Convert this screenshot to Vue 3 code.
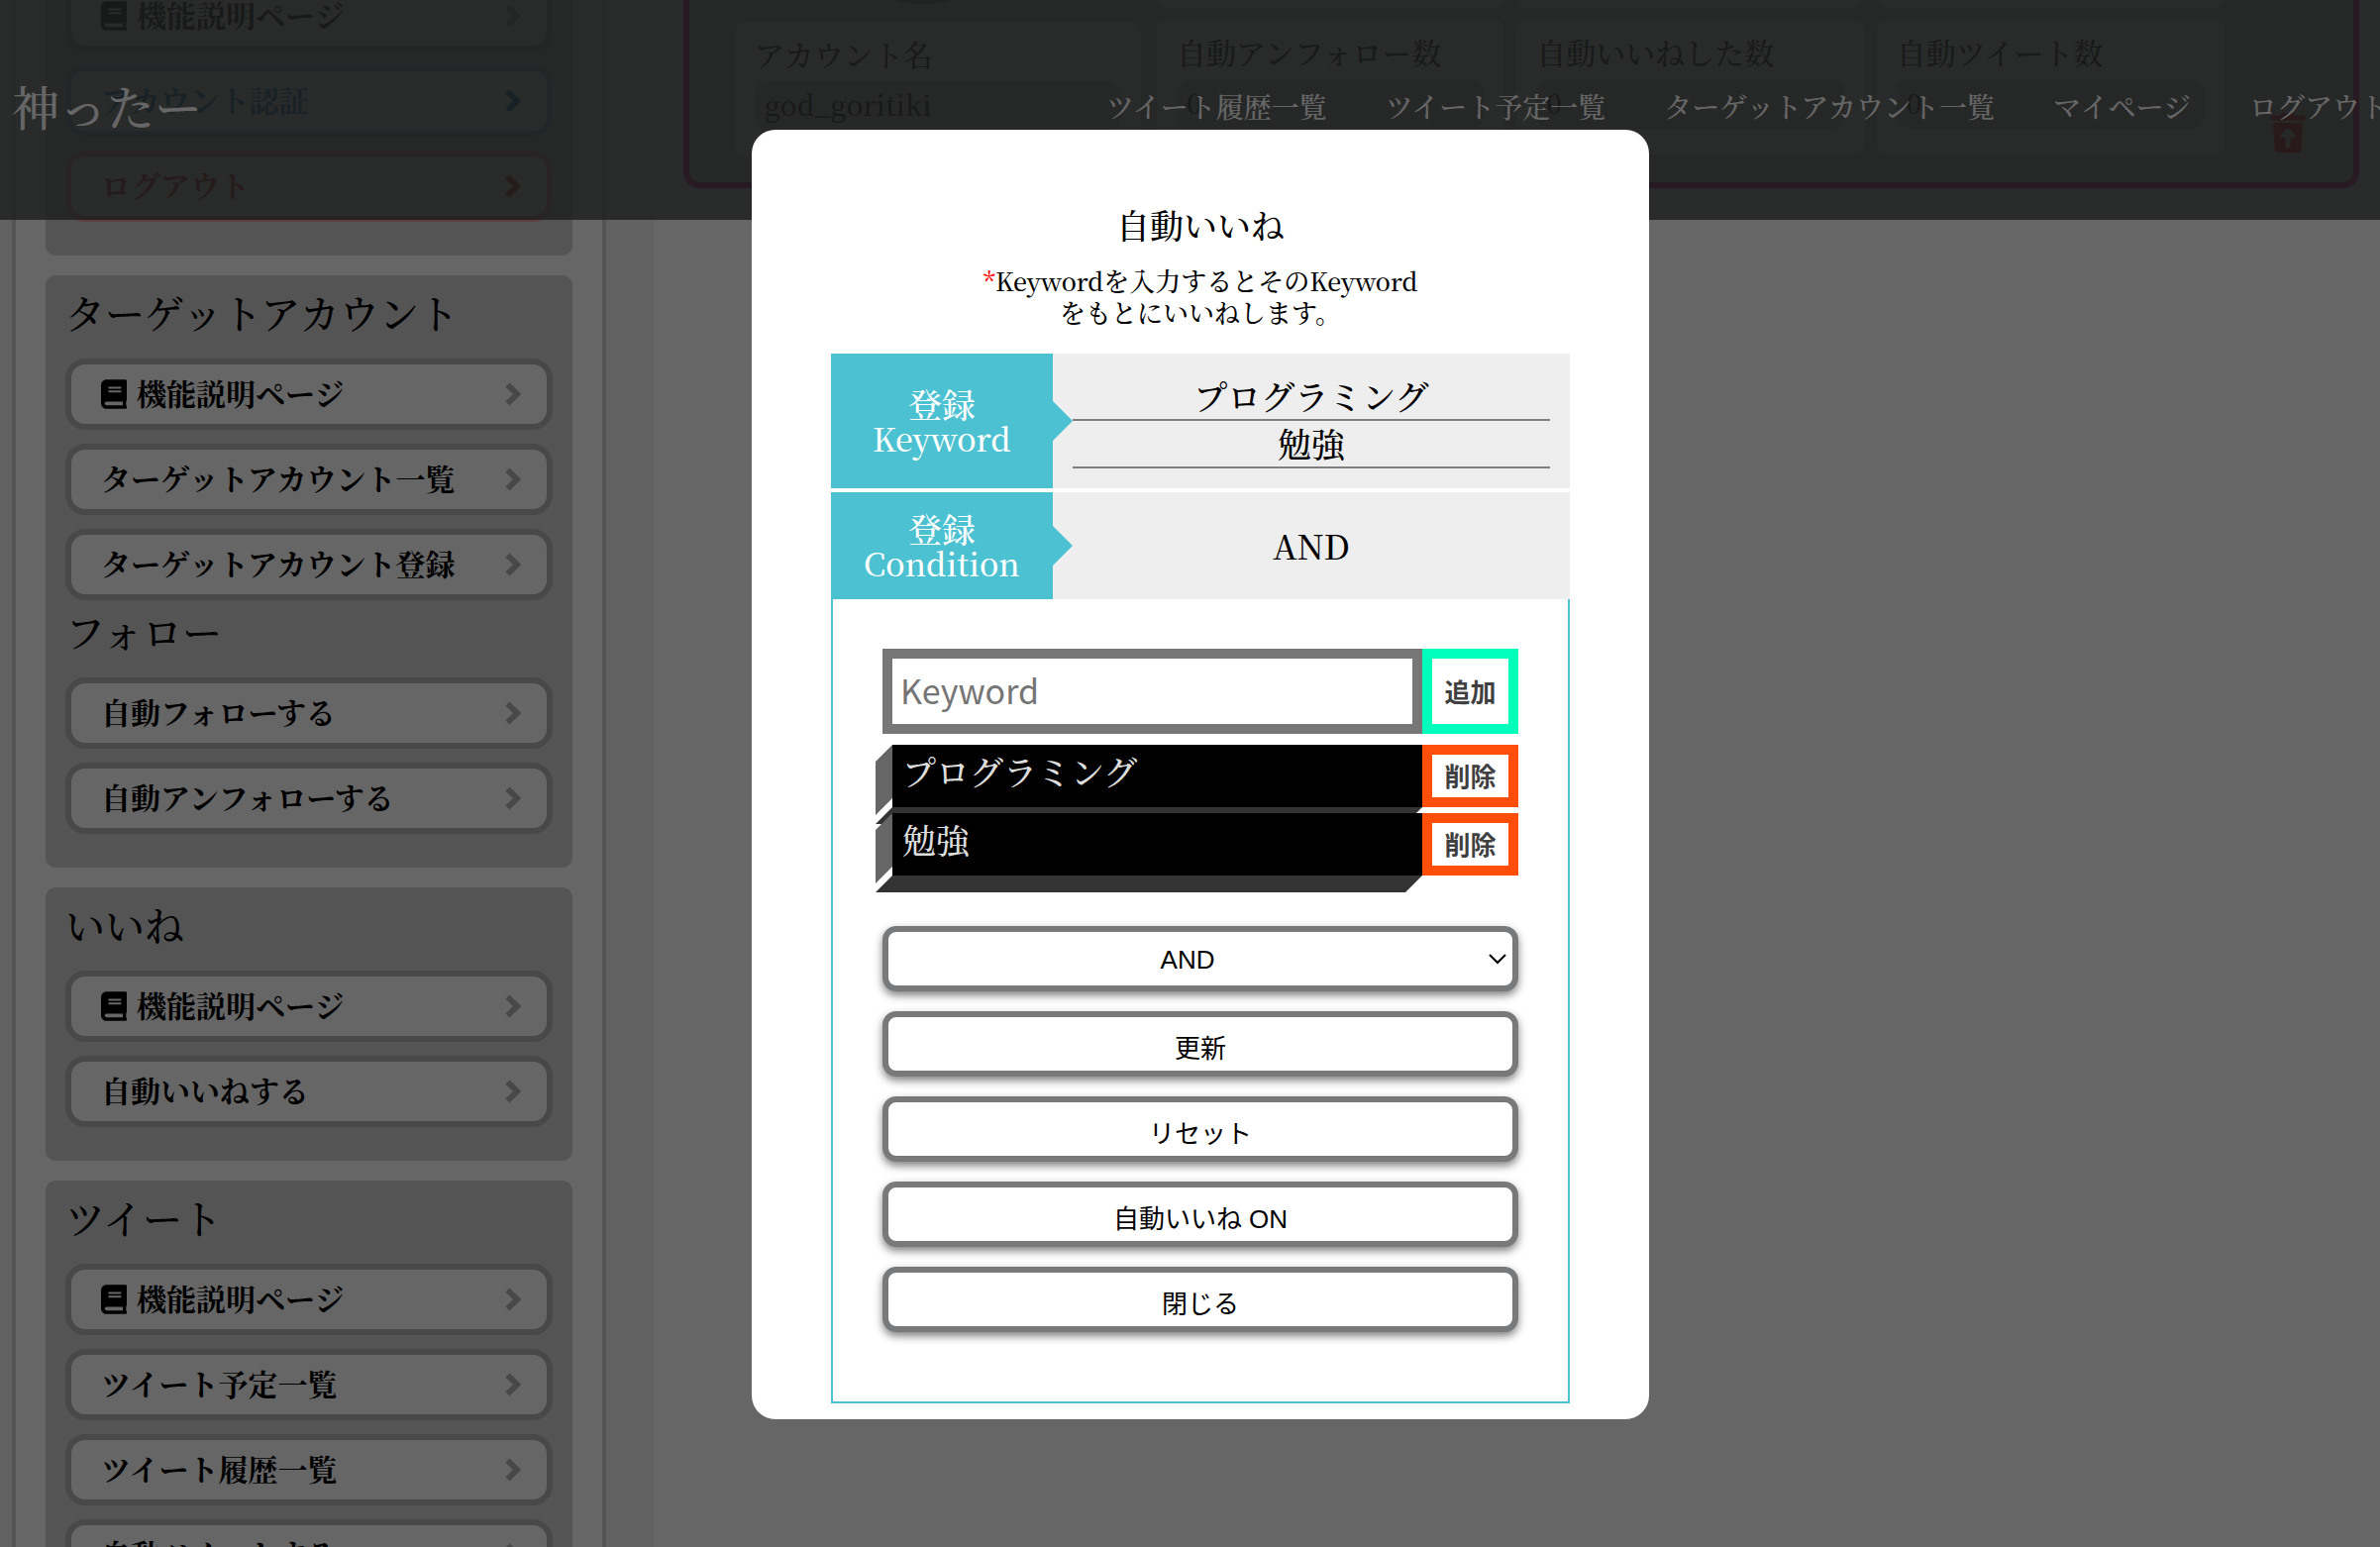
<script setup>
import { ref } from 'vue'

const navLinks = ['ツイート履歴一覧', 'ツイート予定一覧', 'ターゲットアカウント一覧', 'マイページ', 'ログアウト']

const sections = [
  {
    groups: [
      {
        items: [
          { label: '機能説明ページ', book: true },
          { label: 'アカウント認証', tone: 'blue' },
          { label: 'ログアウト', tone: 'red' },
        ],
      },
    ],
  },
  {
    groups: [
      {
        title: 'ターゲットアカウント',
        items: [
          { label: '機能説明ページ', book: true },
          { label: 'ターゲットアカウント一覧' },
          { label: 'ターゲットアカウント登録' },
        ],
      },
      {
        title: 'フォロー',
        items: [{ label: '自動フォローする' }, { label: '自動アンフォローする' }],
      },
    ],
  },
  {
    groups: [
      {
        title: 'いいね',
        items: [{ label: '機能説明ページ', book: true }, { label: '自動いいねする' }],
      },
    ],
  },
  {
    groups: [
      {
        title: 'ツイート',
        items: [
          { label: '機能説明ページ', book: true },
          { label: 'ツイート予定一覧' },
          { label: 'ツイート履歴一覧' },
          { label: '自動ツイートする' },
        ],
      },
    ],
  },
]

const stats = [
  { label: '自動アンフォロー数', value: '0' },
  { label: '自動いいねした数', value: '0' },
  { label: '自動ツイート数', value: '0' },
]

const keywords = ref(['プログラミング', '勉強'])
const draft = ref('')
const condition = ref('AND')
const actions = ['更新', 'リセット', '自動いいね ON', '閉じる']

function addKeyword() {
  if (draft.value) keywords.value.push(draft.value)
  draft.value = ''
}
</script>

<template>
  <div class="root">
    <div class="page">
      <aside class="side">
        <div class="side-inner">
          <section v-for="(section, i) in sections" :key="i" class="menu">
            <div v-for="(group, g) in section.groups" :key="g">
              <h2 v-if="group.title">{{ group.title }}</h2>
              <a v-for="item in group.items" :key="item.label" href="#" class="menu-link" :class="item.tone">
                <svg v-if="item.book" class="book" viewBox="0 0 448 512" aria-hidden="true">
                  <path d="M448 360V24c0-13.3-10.7-24-24-24H96C43 0 0 43 0 96v320c0 53 43 96 96 96h328c13.3 0 24-10.7 24-24v-16c0-7.5-3.5-14.3-8.9-18.7-4.2-15.4-4.2-59.3 0-74.7 5.4-4.3 8.9-11.1 8.9-18.6zM128 134c0-3.3 2.7-6 6-6h212c3.3 0 6 2.7 6 6v20c0 3.3-2.7 6-6 6H134c-3.3 0-6-2.7-6-6v-20zm0 64c0-3.3 2.7-6 6-6h212c3.3 0 6 2.7 6 6v20c0 3.3-2.7 6-6 6H134c-3.3 0-6-2.7-6-6v-20zm253.4 250H96c-17.7 0-32-14.3-32-32 0-17.6 14.4-32 32-32h285.4c-1.9 17.1-1.9 46.9 0 64z" />
                </svg>
                <span>{{ item.label }}</span>
                <svg class="chevron" viewBox="0 0 16 24" aria-hidden="true">
                  <path d="M2.5 2.5L12 12L2.5 21.5" />
                </svg>
              </a>
            </div>
          </section>
        </div>
      </aside>

      <main class="main">
        <article class="card">
          <div class="profile">
            <div class="avatar"></div>
            <div class="panel">
              <h3>アカウント名</h3>
              <p class="value">god_goritiki</p>
            </div>
          </div>
          <div class="stats">
            <div v-for="n in 3" :key="n" class="panel blank"></div>
            <div v-for="stat in stats" :key="stat.label" class="panel">
              <h3>{{ stat.label }}</h3>
              <p class="value">{{ stat.value }}</p>
            </div>
          </div>
          <button type="button" class="trash" aria-label="削除">
            <svg viewBox="0 0 448 512" aria-hidden="true">
              <path d="M53.2 467a48 48 0 0 0 47.9 45h245.8a48 48 0 0 0 47.9-45L416 128H32zm70.11-175.8l89.38-94.26a15.41 15.41 0 0 1 22.62 0l89.38 94.26c10.08 10.62 2.94 28.8-11.32 28.8H256v112a16 16 0 0 1-16 16h-32a16 16 0 0 1-16-16V320h-57.37c-14.26 0-21.4-18.18-11.32-28.8zM432 32H312l-9.4-18.7A24 24 0 0 0 281.1 0H166.8a23.72 23.72 0 0 0-21.4 13.3L136 32H16A16 16 0 0 0 0 48v32a16 16 0 0 0 16 16h416a16 16 0 0 0 16-16V48a16 16 0 0 0-16-16z" />
            </svg>
          </button>
        </article>
      </main>
    </div>

    <header class="top">
      <a href="#" class="brand">神ったー</a>
      <nav>
        <a v-for="link in navLinks" :key="link" href="#">{{ link }}</a>
      </nav>
    </header>

    <div class="overlay">
      <div class="modal" role="dialog" aria-labelledby="modal-title">
        <h1 id="modal-title">自動いいね</h1>
        <p class="note">
          <span class="star">*</span><span class="latin">Keyword</span>を入力するとその<span class="latin">Keyword</span><br />をもとにいいねします。
        </p>

        <table>
          <tbody>
            <tr>
              <th scope="row">登録<br /><span class="latin">Keyword</span></th>
              <td>
                <ul class="registered">
                  <li v-for="word in keywords" :key="word">{{ word }}</li>
                </ul>
              </td>
            </tr>
            <tr>
              <th scope="row">登録<br /><span class="latin">Condition</span></th>
              <td>{{ condition }}</td>
            </tr>
          </tbody>
        </table>

        <form @submit.prevent="addKeyword">
          <div class="entry">
            <input v-model="draft" type="text" placeholder="Keyword" aria-label="Keyword" />
            <button type="submit" class="box add">追加</button>
          </div>
          <ul class="words">
            <li v-for="(word, i) in keywords" :key="word">
              <span>{{ word }}</span>
              <button type="button" class="box remove" @click="keywords.splice(i, 1)">削除</button>
            </li>
          </ul>
          <div class="actions">
            <div class="select">
              <select v-model="condition" class="action" aria-label="Condition">
                <option>AND</option>
                <option>OR</option>
              </select>
              <svg viewBox="0 0 20 12" aria-hidden="true"><path d="M2 2L10 10L18 2" /></svg>
            </div>
            <button v-for="action in actions" :key="action" type="button" class="action">{{ action }}</button>
          </div>
        </form>
      </div>
    </div>
  </div>
</template>

<style>
body {
  margin: 0;
  overflow: hidden;
}
</style>

<style scoped>
* {
  box-sizing: border-box;
}

h1, h2, h3, p, ul {
  margin: 0;
  padding: 0;
  font-weight: 500;
}

ul {
  list-style: none;
}

a {
  color: inherit;
  text-decoration: none;
}

button, input, select {
  margin: 0;
  font-family: "Liberation Sans", "Noto Sans CJK JP", sans-serif;
}

.root {
  position: relative;
  height: 100vh;
  overflow: hidden;
  background: #fff;
  color: #000;
  font-family: "Noto Serif CJK JP", "Liberation Serif", "Noto Sans CJK JP", serif;
  font-weight: 500;
}

/* The page is a little wider than the window and already scrolled down. */
.page {
  display: flex;
  align-items: flex-start;
  width: calc(100% + 21px);
  margin-top: -200px;
}

.side {
  flex: 0 0 660px;
  padding: 0 48px 0 12px;
  background: #f5f5f5;
}

.side-inner {
  display: flex;
  flex-direction: column;
  gap: 20px;
  padding: 0 30px;
  border: solid #d3d3d3;
  border-width: 0 4px;
  background: #fff;
}

.menu {
  padding: 20px;
  border-radius: 10px;
  background: #d3d3d3;
}

.menu:first-child {
  display: flex;
  flex-direction: column;
  justify-content: flex-end;
  min-height: 458px;
}

.menu h2 {
  margin-bottom: 30px;
  font-size: 40px;
  line-height: 34px;
}

.menu-link {
  display: flex;
  align-items: center;
  gap: 10px;
  height: 72px;
  margin-bottom: 14px;
  padding: 0 26px 0 30px;
  border: 6px solid #b3b3b3;
  border-radius: 20px;
  background: #fff;
  font-size: 30px;
  font-weight: 700;
  line-height: 40px;
}

.menu-link span {
  padding-bottom: 4px;
}

.book {
  width: 26px;
  height: 30px;
}

.chevron {
  width: 16px;
  height: 24px;
  margin-left: auto;
  fill: none;
  stroke: #b3b3b3;
  stroke-width: 6;
}

.blue {
  border-color: #82bee6;
  color: #0074c0;
}

.blue .chevron {
  stroke: #0074c0;
}

.red {
  border-color: #f09a9e;
  color: #d41515;
}

.red .chevron {
  stroke: #d41515;
}

.main {
  flex: 1;
  padding: 0 42px 0 30px;
}

.card {
  display: flex;
  align-items: flex-end;
  height: 390px;
  padding: 0 48px 26px 46px;
  border: 6px solid #e6108c;
  border-radius: 16px;
  background: #d3d3d3;
}

.profile {
  display: flex;
  flex: 0 0 410px;
  flex-direction: column;
  gap: 18px;
  margin-right: 16px;
}

.avatar {
  align-self: center;
  width: 180px;
  height: 180px;
  margin-right: 30px;
  border-radius: 50%;
  background: #777;
}

.panel {
  height: 136px;
  padding: 16px 20px 0;
  border-radius: 12px;
  background: #fff;
}

.panel h3 {
  margin-bottom: 12px;
  font-size: 30px;
  line-height: 32px;
}

.value {
  height: 50px;
  padding: 0 10px;
  border-radius: 14px;
  background: #d3d3d3;
  font-size: 28px;
  line-height: 46px;
}

.stats {
  display: grid;
  flex: 1;
  grid-template-columns: repeat(3, 1fr);
  gap: 12px;
  padding-bottom: 2px;
}

.trash {
  width: 36px;
  height: 40px;
  margin: 0 0 4px 46px;
  padding: 0;
  border: 0;
  background: none;
}

.trash svg {
  display: block;
  width: 100%;
  height: 100%;
  fill: #f01010;
}

.top {
  position: absolute;
  top: 0;
  left: 0;
  display: flex;
  align-items: center;
  justify-content: space-between;
  width: calc(100% + 21px);
  height: 222px;
  padding: 0 13px 8px 12px;
  background: rgba(74, 77, 78, 0.84);
  color: #fff;
}

.brand {
  font-size: 48px;
  line-height: 60px;
}

.top nav {
  display: flex;
  gap: 59px;
  font-size: 28px;
  line-height: 40px;
  white-space: nowrap;
}

.overlay {
  position: absolute;
  top: 0;
  left: 0;
  display: flex;
  align-items: center;
  justify-content: center;
  width: calc(100% + 21px);
  height: 100%;
  padding-top: 2px;
  background: rgba(0, 0, 0, 0.6);
}

.modal {
  width: 100%;
  max-width: 906px;
  padding: 80px 80px 16px;
  border-radius: 24px;
  background: #fff;
  text-align: center;
}

.modal h1 {
  margin-bottom: 24px;
  font-size: 34px;
  line-height: 32px;
}

.note {
  margin-bottom: 26px;
  font-size: 26px;
  line-height: 32px;
}

.note .latin {
  font-size: 25px;
}

.star {
  color: #f00;
}

table {
  width: 100%;
  table-layout: fixed;
  border-collapse: separate;
  border-spacing: 0;
  font-size: 34px;
  line-height: 34px;
}

th {
  position: relative;
  width: 30%;
  padding: 20px 0;
  background: #4bc1d1;
  background-clip: padding-box;
  color: #fff;
  font-weight: 500;
}

th::after {
  position: absolute;
  top: calc(50% - 20px);
  left: 100%;
  border: 20px solid transparent;
  border-right-width: 0;
  border-left-color: #4bc1d1;
  content: "";
}

th .latin {
  font-size: 32px;
}

td {
  padding: 20px;
  background: #eee;
  background-clip: padding-box;
}

tr:first-child > * {
  border-bottom: 4px solid transparent;
}

.registered li {
  border-bottom: 2px solid #808080;
  line-height: 46px;
}

form {
  padding: 50px 50px 70px;
  border: 2px solid #4bc1d1;
  border-top: 0;
}

.entry {
  display: flex;
  height: 86px;
}

.entry input {
  flex: 1;
  min-width: 0;
  padding: 0 8px 4px;
  border: 10px solid #777;
  border-radius: 0;
  font-family: "Noto Sans CJK JP", sans-serif;
  font-size: 34px;
}

.entry input::placeholder {
  color: #757575;
}

.box {
  flex: 0 0 97px;
  padding: 0 0 2px;
  border: 10px solid;
  background: #fff;
  color: #404040;
  font-size: 26px;
  font-weight: 700;
}

.add {
  border-color: #00ffbb;
}

.remove {
  border-color: #ff4d0a;
}

.words {
  display: flex;
  flex-direction: column;
  gap: 6px;
  margin: 11px 0 0 10px;
}

.words li {
  position: relative;
  display: flex;
  height: 63px;
}

.words span {
  flex: 1;
  padding-left: 10px;
  background: #000;
  color: #ddd;
  font-size: 34px;
  line-height: 54px;
  text-align: left;
}

/* Side and bottom faces of the raised bar. */
.words li::before {
  position: absolute;
  top: 0;
  left: -17px;
  width: 17px;
  height: 71px;
  background: #666;
  clip-path: polygon(100% 0, 100% 54px, 0 100%, 0 17px);
  content: "";
}

.words li::after {
  position: absolute;
  top: 100%;
  right: 97px;
  left: -17px;
  height: 17px;
  background: #333;
  clip-path: polygon(17px 0, 100% 0, calc(100% - 17px) 100%, 0 100%);
  content: "";
}

.actions {
  display: flex;
  flex-direction: column;
  gap: 20px;
  margin-top: 51px;
}

.select {
  position: relative;
  display: flex;
}

.action {
  width: 100%;
  height: 66px;
  padding: 4px 0 0;
  border: 6px solid #77797a;
  border-radius: 14px;
  background: #fff;
  box-shadow: 0 4px 8px rgba(0, 0, 0, 0.5);
  color: #000;
  font-size: 26px;
}

select.action {
  padding: 2px 26px 0 0;
  appearance: none;
  text-align: center;
  text-align-last: center;
}

.select svg {
  position: absolute;
  top: 27px;
  right: 11px;
  width: 20px;
  height: 12px;
  fill: none;
  stroke: #000;
  stroke-width: 2;
  pointer-events: none;
}
</style>
